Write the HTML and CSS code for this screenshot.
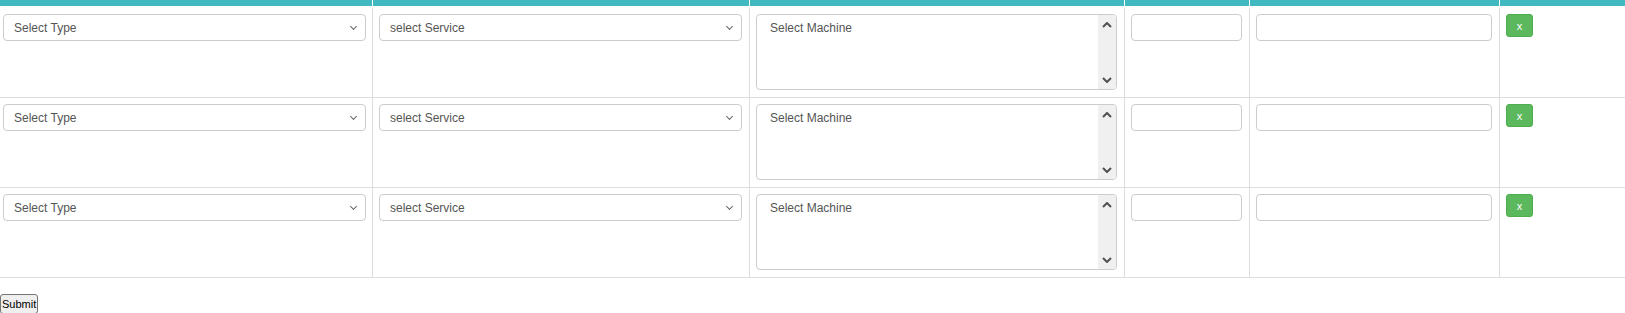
FILE: index.html
```html
<!DOCTYPE html>
<html lang="en">
<head>
    <meta charset="UTF-8">
    <meta name="viewport" content="width=device-width, initial-scale=1.0">
    <title>Machine Booking</title>
    <link rel="stylesheet" href="styles.css">
</head>
<body>
    <form class="booking-form">
        <table class="entry-table">
            <colgroup>
                <col class="col-type">
                <col class="col-service">
                <col class="col-machine">
                <col class="col-qty">
                <col class="col-note">
                <col class="col-action">
            </colgroup>
            <thead>
                <tr>
                    <th></th><th></th><th></th><th></th><th></th><th></th>
                </tr>
            </thead>
            <tbody>
                <tr>
                    <td class="first">
                        <div class="select-box">
                            <select class="field">
                                <option>Select Type</option>
                            </select>
                        </div>
                    </td>
                    <td>
                        <div class="select-box">
                            <select class="field">
                                <option>select Service</option>
                            </select>
                        </div>
                    </td>
                    <td>
                        <div class="machine-list" role="listbox">
                            <div class="machine-options">
                                <div class="machine-option">Select Machine</div>
                            </div>
                            <div class="fake-scroll">
                                <svg class="chev" width="10" height="6" viewBox="0 0 10 6"><path d="M1 5 L5 1 L9 5" fill="none" stroke="#505050" stroke-width="2"/></svg>
                                <svg class="chev" width="10" height="6" viewBox="0 0 10 6"><path d="M1 1 L5 5 L9 1" fill="none" stroke="#505050" stroke-width="2"/></svg>
                            </div>
                        </div>
                    </td>
                    <td><input class="field" type="text"></td>
                    <td><input class="field" type="text"></td>
                    <td><button type="button" class="btn-remove">x</button></td>
                </tr>
                <tr>
                    <td class="first">
                        <div class="select-box">
                            <select class="field">
                                <option>Select Type</option>
                            </select>
                        </div>
                    </td>
                    <td>
                        <div class="select-box">
                            <select class="field">
                                <option>select Service</option>
                            </select>
                        </div>
                    </td>
                    <td>
                        <div class="machine-list" role="listbox">
                            <div class="machine-options">
                                <div class="machine-option">Select Machine</div>
                            </div>
                            <div class="fake-scroll">
                                <svg class="chev" width="10" height="6" viewBox="0 0 10 6"><path d="M1 5 L5 1 L9 5" fill="none" stroke="#505050" stroke-width="2"/></svg>
                                <svg class="chev" width="10" height="6" viewBox="0 0 10 6"><path d="M1 1 L5 5 L9 1" fill="none" stroke="#505050" stroke-width="2"/></svg>
                            </div>
                        </div>
                    </td>
                    <td><input class="field" type="text"></td>
                    <td><input class="field" type="text"></td>
                    <td><button type="button" class="btn-remove">x</button></td>
                </tr>
                <tr>
                    <td class="first">
                        <div class="select-box">
                            <select class="field">
                                <option>Select Type</option>
                            </select>
                        </div>
                    </td>
                    <td>
                        <div class="select-box">
                            <select class="field">
                                <option>select Service</option>
                            </select>
                        </div>
                    </td>
                    <td>
                        <div class="machine-list" role="listbox">
                            <div class="machine-options">
                                <div class="machine-option">Select Machine</div>
                            </div>
                            <div class="fake-scroll">
                                <svg class="chev" width="10" height="6" viewBox="0 0 10 6"><path d="M1 5 L5 1 L9 5" fill="none" stroke="#505050" stroke-width="2"/></svg>
                                <svg class="chev" width="10" height="6" viewBox="0 0 10 6"><path d="M1 1 L5 5 L9 1" fill="none" stroke="#505050" stroke-width="2"/></svg>
                            </div>
                        </div>
                    </td>
                    <td><input class="field" type="text"></td>
                    <td><input class="field" type="text"></td>
                    <td><button type="button" class="btn-remove">x</button></td>
                </tr>
            </tbody>
        </table>
        <button type="submit" class="btn-submit">Submit</button>
    </form>
</body>
</html>
```

FILE: styles.css
```css
body {
    margin: 0;
    background: #ffffff;
    font-family: "Liberation Sans", Arial, sans-serif;
    font-size: 12px;
    color: #555555;
}
.entry-table {
    width: 100%;
    table-layout: fixed;
    border-collapse: separate;
    border-spacing: 0;
}
.col-type { width: 373px; }
.col-service { width: 377px; }
.col-machine { width: 375px; }
.col-qty { width: 125px; }
.col-note { width: 250px; }
.entry-table th {
    height: 6px;
    padding: 0;
    background: #40b9c0;
    border-right: 1px solid #ffffff;
    border-bottom: 2px solid #ffffff;
}
.entry-table th:last-child {
    border-right: none;
}
.entry-table td {
    vertical-align: top;
    padding: 6px 7px 7px 6px;
    height: 76px;
    border-right: 1px solid #dddddd;
    border-bottom: 1px solid #dddddd;
}
.entry-table td:last-child {
    border-right: none;
    padding-left: 6px;
}
.entry-table td.first {
    padding-left: 3px;
    padding-right: 6px;
}
.field {
    display: block;
    box-sizing: border-box;
    width: 100%;
    height: 27px;
    padding: 0 10px;
    border: 1px solid #cccccc;
    border-radius: 4px;
    background-color: #ffffff;
    font-family: "Liberation Sans", Arial, sans-serif;
    font-size: 12px;
    color: #555555;
}
.select-box {
    position: relative;
}
.select-box .field {
    appearance: none;
    -webkit-appearance: none;
}
.select-box::after {
    content: "";
    position: absolute;
    right: 10px;
    top: 10px;
    width: 4px;
    height: 4px;
    border-right: 1px solid #666666;
    border-bottom: 1px solid #666666;
    transform: rotate(45deg);
    pointer-events: none;
}
.machine-list {
    box-sizing: border-box;
    display: flex;
    height: 76px;
    border: 1px solid #cccccc;
    border-radius: 4px;
    overflow: hidden;
}
.machine-options {
    flex: 1;
    padding: 6px 13px;
}
.machine-option {
    line-height: 14px;
}
.fake-scroll {
    width: 18px;
    background: #f0f0f0;
    display: flex;
    flex-direction: column;
    justify-content: space-between;
    align-items: center;
    padding: 7px 0 6px;
}
.chev {
    display: block;
}
.btn-remove {
    width: 27px;
    height: 23px;
    padding: 0;
    background: #5cb85c;
    border: 1px solid #4cae4c;
    border-radius: 3px;
    color: #ffffff;
    font-family: "Liberation Sans", Arial, sans-serif;
    font-size: 11px;
    cursor: pointer;
}
.btn-submit {
    margin: 16px 0 0 0;
    padding: 3px 1px;
    font-family: "Liberation Sans", Arial, sans-serif;
    font-size: 11px;
    color: #000000;
    background: #efefef;
    border: 1px solid #767676;
    border-radius: 3px;
}
```
